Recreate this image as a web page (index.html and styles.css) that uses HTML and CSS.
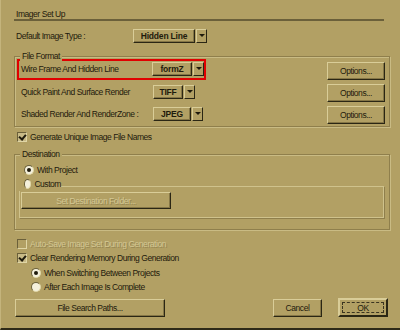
FILE: index.html
```html
<!DOCTYPE html>
<html>
<head>
<meta charset="utf-8">
<link rel="stylesheet" href="styles.css">
</head>
<body>
<div class="win">
  <div class="title">Imager Set Up</div>

  <div class="deftype">
    <span class="lbl">Default Image Type :</span>
    <div class="dd dd-hidden"><span class="dd-btn">Hidden Line</span><span class="dd-arrow"></span></div>
  </div>

  <div class="group ff">
    <span class="legend">File Format</span>
    <div class="fmt-row">
      <div class="fmt-left hl">
        <span class="lbl">Wire Frame And Hidden Line</span>
        <div class="dd dd-formz"><span class="dd-btn">formZ</span><span class="dd-arrow"></span></div>
      </div>
      <button class="btn opt">Options...</button>
    </div>
    <div class="fmt-row r2">
      <div class="fmt-left">
        <span class="lbl">Quick Paint And Surface Render</span>
        <div class="dd dd-tiff"><span class="dd-btn">TIFF</span><span class="dd-arrow"></span></div>
      </div>
      <button class="btn opt">Options...</button>
    </div>
    <div class="fmt-row r3">
      <div class="fmt-left">
        <span class="lbl">Shaded Render And RenderZone :</span>
        <div class="dd dd-jpeg"><span class="dd-btn">JPEG</span><span class="dd-arrow"></span></div>
      </div>
      <button class="btn opt">Options...</button>
    </div>
  </div>

  <div class="check-row gen"><span class="cb checked"></span><span>Generate Unique Image File Names</span></div>

  <div class="group dest">
    <span class="legend">Destination</span>
    <div class="radio-row wp"><span class="rb on"></span><span>With Project</span></div>
    <div class="custom">
      <div class="radio-row cust"><span class="rb"></span><span>Custom</span></div>
      <button class="btn setdest" disabled>Set Destination Folder...</button>
    </div>
  </div>

  <div class="check-row auto disabled"><span class="cb"></span><span>Auto-Save Image Set During Generation</span></div>
  <div class="check-row clear"><span class="cb checked"></span><span>Clear Rendering Memory During Generation</span></div>
  <div class="radio-row sub first"><span class="rb on"></span><span>When Switching Between Projects</span></div>
  <div class="radio-row sub"><span class="rb"></span><span>After Each Image Is Complete</span></div>

  <div class="bottom">
    <button class="btn fsp">File Search Paths...</button>
    <div class="spacer"></div>
    <button class="btn cancel">Cancel</button>
    <button class="btn ok"><span class="focus">OK</span></button>
  </div>
</div>
</body>
</html>
```

FILE: styles.css
```css
* { box-sizing: border-box; }
html, body { margin: 0; padding: 0; }
body {
  background: #b2a064;
  font-family: "Liberation Sans", Arial, sans-serif;
  font-size: 8.5px;
  letter-spacing: -0.45px;
  color: #1e1a0c;
  white-space: nowrap;
}
.win {
  width: 400px;
  height: 330px;
  background: #b2a064;
  border-left: 1px solid #c4b47c;
  border-bottom: 2px solid #2e2a18;
  padding: 8px 10px 0 13px;
  display: flex;
  flex-direction: column;
}
.title {
  height: 13px;
  line-height: 12px;
  width: 370px;
  padding-left: 2px;
  border-bottom: 2px solid #6b603a;
}
.deftype {
  margin-top: 8px;
  height: 14px;
  display: flex;
  align-items: center;
}
.deftype .lbl { padding-left: 2px; width: 119px; }

.dd { display: flex; height: 14px; }
.dd-btn {
  display: flex; align-items: center; justify-content: center;
  font-weight: bold;
  letter-spacing: -0.2px;
  border-top: 1px solid #d9cd98;
  border-left: 1px solid #d9cd98;
  border-right: 1px solid #2a2614;
  border-bottom: 1px solid #2a2614;
  box-shadow: inset -1px -1px 0 #857646;
  height: 14px;
}
.dd-arrow {
  position: relative;
  width: 11px;
  height: 14px;
  margin-left: 1px;
  border-top: 1px solid #d9cd98;
  border-left: 1px solid #d9cd98;
  border-right: 1px solid #2a2614;
  border-bottom: 1px solid #2a2614;
}
.dd-arrow::after {
  content: "";
  position: absolute;
  left: 2px; top: 4px;
  border-left: 3px solid transparent;
  border-right: 3px solid transparent;
  border-top: 3px solid #1e1a0c;
}
.dd-hidden .dd-btn { width: 62px; }
.dd-formz .dd-btn { width: 40px; }
.dd-tiff .dd-btn { width: 30px; }
.dd-jpeg .dd-btn { width: 38px; }

.group {
  position: relative;
  width: 376px;
  border: 1px solid #8f7f4c;
  box-shadow: inset 1px 1px 0 #c9bb84, 1px 1px 0 #c9bb84;
}
.legend {
  position: absolute;
  top: -7px;
  left: 5px;
  padding: 0 2px;
  line-height: 12px;
  background: #b2a064;
}
.ff { margin-top: 13px; padding: 1px 4px 2px 2px; }
.fmt-row {
  display: flex;
  align-items: center;
  justify-content: space-between;
  height: 22px;
}
.fmt-row.r2 { height: 23px; }
.fmt-row.r3 { height: 21px; }
.fmt-left {
  width: 189px;
  height: 21px;
  display: flex;
  align-items: center;
  padding-left: 4px;
}
.fmt-left.hl { border: 2px solid #e00000; padding-left: 2px; }
.fmt-left .lbl { width: 132px; }
.fmt-row .btn.opt { margin-top: 3px; }

.btn {
  font: inherit;
  letter-spacing: inherit;
  color: inherit;
  background: #b2a064;
  border-top: 1px solid #d9cd98;
  border-left: 1px solid #d9cd98;
  border-right: 1px solid #2a2614;
  border-bottom: 1px solid #2a2614;
  box-shadow: inset -1px -1px 0 #857646;
  padding: 0;
  height: 18px;
}
.opt { width: 58px; }

.check-row, .radio-row {
  display: flex;
  align-items: center;
  height: 14px;
  gap: 3px;
}
.check-row { padding-left: 3px; }
.gen { margin-top: 3px; margin-bottom: 10px; }
.cb {
  width: 10px; height: 10px;
  background: #c8ba86;
  border-top: 1px solid #6b603a;
  border-left: 1px solid #6b603a;
  border-right: 1px solid #e0d6a6;
  border-bottom: 1px solid #e0d6a6;
  position: relative;
}
.cb.checked::after {
  content: "";
  position: absolute;
  left: 2px; top: 0px;
  width: 3px; height: 5px;
  border-right: 2px solid #1e1a0c;
  border-bottom: 2px solid #1e1a0c;
  transform: rotate(40deg);
}
.disabled { color: #d4c894; text-shadow: 1px 1px 0 #958552; }
.disabled .cb { background: #b2a064; }

.rb {
  width: 10px; height: 10px;
  border-radius: 50%;
  background: #f4f0dc;
  border-top: 1px solid #6b603a;
  border-left: 1px solid #6b603a;
  border-right: 1px solid #e0d6a6;
  border-bottom: 1px solid #e0d6a6;
  position: relative;
}
.rb.on::after {
  content: "";
  position: absolute;
  left: 2px; top: 2px;
  width: 4px; height: 4px;
  border-radius: 50%;
  background: #1e1a0c;
}

.dest { height: 76px; padding: 8px 5px 0 4px; }
.wp { padding-left: 5px; }
.custom {
  position: relative;
  margin-top: 0;
  height: 41px;
}
.custom::before {
  content: "";
  position: absolute;
  left: 0; right: 0; top: 9px; bottom: 0;
  border: 1px solid #cfc28c;
  box-shadow: 1px 1px 0 #8f7f4c;
}
.custom .cust { position: relative; padding-left: 5px; width: 42px; background: #b2a064; }
.setdest {
  position: relative;
  margin: 1px 0 0 2px;
  width: 150px;
  height: 17px;
  color: #d4c894;
  text-shadow: 1px 1px 0 #958552;
}

.auto { margin-top: 7px; }
.sub { padding-left: 17px; }
.sub.first { margin-top: 1px; }

.bottom {
  display: flex;
  margin-top: 5px;
  padding-left: 1px;
  width: 374px;
}
.fsp { width: 150px; }
.spacer { flex: 1; }
.cancel { width: 49px; margin-right: 16px; }
.ok {
  width: 50px;
  height: 19px;
  border: 2px solid #2a2614;
  border-top-color: #d9cd98;
  border-left-color: #d9cd98;
  box-shadow: none;
  padding: 2px;
  margin-top: -1px;
}
.ok .focus {
  display: flex; align-items: center; justify-content: center;
  width: 100%; height: 100%;
  border: 1px dashed #3a3420;
}
```
